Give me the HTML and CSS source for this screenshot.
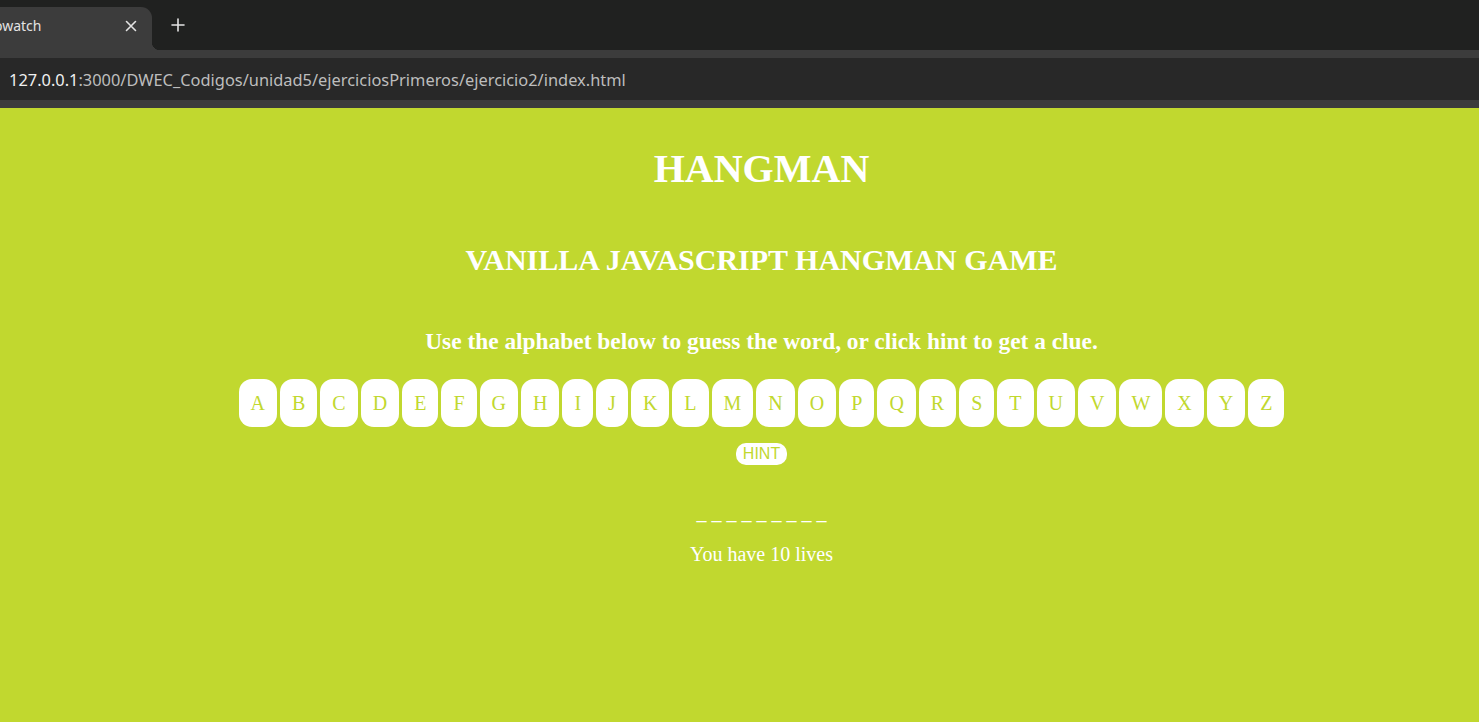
FILE: index.html
```html
<!DOCTYPE html>
<html lang="en">
<head>
<meta charset="utf-8">
<title>Hangman</title>
<link rel="stylesheet" href="styles.css">
</head>
<body>
<div class="chrome">
  <div class="tabstrip">
    <div class="tab">
      <span class="tab-title">owatch</span>
      <svg class="tab-close" width="12" height="12" viewBox="0 0 12 12"><path d="M1.5 1.5 L10.5 10.5 M10.5 1.5 L1.5 10.5" stroke="#e3e3e3" stroke-width="1.6" stroke-linecap="round"/></svg>
    </div>
    <svg class="newtab" width="14" height="14" viewBox="0 0 14 14"><path d="M7 1 V13 M1 7 H13" stroke="#e3e3e3" stroke-width="1.6" stroke-linecap="round"/></svg>
  </div>
  <div class="toolbar">
    <div class="omnibox"><span class="host">127.0.0.1</span><span class="path">:3000/DWEC_Codigos/unidad5/ejerciciosPrimeros/ejercicio2/index.html</span></div>
  </div>
</div>
<main class="game">
  <h1 class="title">HANGMAN</h1>
  <h2 class="subtitle">VANILLA JAVASCRIPT HANGMAN GAME</h2>
  <h3 class="instructions">Use the alphabet below to guess the word, or click hint to get a clue.</h3>
  <ul class="alphabet">
    <li class="letter">A</li><li class="letter">B</li><li class="letter">C</li><li class="letter">D</li><li class="letter">E</li><li class="letter">F</li><li class="letter">G</li><li class="letter">H</li><li class="letter">I</li><li class="letter">J</li><li class="letter">K</li><li class="letter">L</li><li class="letter">M</li><li class="letter">N</li><li class="letter">O</li><li class="letter">P</li><li class="letter">Q</li><li class="letter">R</li><li class="letter">S</li><li class="letter">T</li><li class="letter">U</li><li class="letter">V</li><li class="letter">W</li><li class="letter">X</li><li class="letter">Y</li><li class="letter">Z</li>
  </ul>
  <button class="hint">HINT</button>
  <p class="word">_ _ _ _ _ _ _ _ _</p>
  <p class="lives">You have 10 lives</p>
</main>
</body>
</html>
```
FILE: styles.css
```css
html, body {
  margin: 0;
  padding: 0;
  height: 100%;
}
body {
  background: #c1d82f;
  font-family: "Liberation Serif", "Times New Roman", serif;
  display: flex;
  flex-direction: column;
  overflow: hidden;
}
.chrome {
  background: #202120;
  font-family: "Noto Sans", "Open Sans", sans-serif;
}
.tabstrip {
  height: 50px;
  display: flex;
  align-items: flex-end;
  position: relative;
}
.tab {
  width: 152px;
  height: 43px;
  background: #3c3c3c;
  border-top-right-radius: 11px;
  display: flex;
  align-items: center;
  position: relative;
  box-sizing: border-box;
  padding-bottom: 6px;
}
.tab::after {
  content: "";
  position: absolute;
  right: -8px;
  bottom: 0;
  width: 8px;
  height: 8px;
  background: radial-gradient(circle at 100% 0, transparent 8px, #3c3c3c 8.5px);
}
.tab-title {
  color: #e3e3e3;
  font-size: 14px;
  margin-left: -6px;
  flex: 1;
}
.tab-close {
  margin-right: 15px;
}
.newtab {
  margin-left: 19px;
  margin-bottom: 18px;
}
.toolbar {
  background: #3c3c3c;
  padding: 8px 0;
}
.omnibox {
  background: #282828;
  height: 42px;
  display: flex;
  align-items: center;
  padding-left: 9px;
  font-size: 16.4px;
}
.host { color: #f0f0f0; }
.path { color: #bdbdbd; }
.game {
  flex: 1;
  display: flex;
  flex-direction: column;
  align-items: center;
  color: #ffffff;
  padding-left: 44px;
}
.title {
  margin: 38px 0 0;
  font-size: 40px;
  line-height: 46px;
  font-weight: bold;
}
.subtitle {
  margin: 51px 0 0;
  font-size: 30px;
  line-height: 34px;
  font-weight: bold;
}
.instructions {
  margin: 51px 0 0;
  font-size: 23.4px;
  line-height: 27px;
  font-weight: bold;
}
.alphabet {
  list-style: none;
  margin: 24px 0 0;
  padding: 0;
  display: flex;
  gap: 3px;
}
.letter {
  height: 48px;
  padding: 0 12px;
  background: #ffffff;
  color: #c1d82f;
  border-radius: 13px;
  font-size: 20px;
  display: flex;
  align-items: center;
  justify-content: center;
}
.hint {
  margin: 16px 0 0;
  height: 22px;
  padding: 0 7px;
  border: none;
  background: #ffffff;
  color: #c1d82f;
  border-radius: 10px;
  font-family: "Liberation Sans", Arial, sans-serif;
  font-size: 16px;
  line-height: 22px;
}
.word {
  margin: 36px 0 0;
  font-size: 20px;
  line-height: 23px;
}
.lives {
  margin: 19px 0 0;
  font-size: 20px;
  line-height: 23px;
}
```
